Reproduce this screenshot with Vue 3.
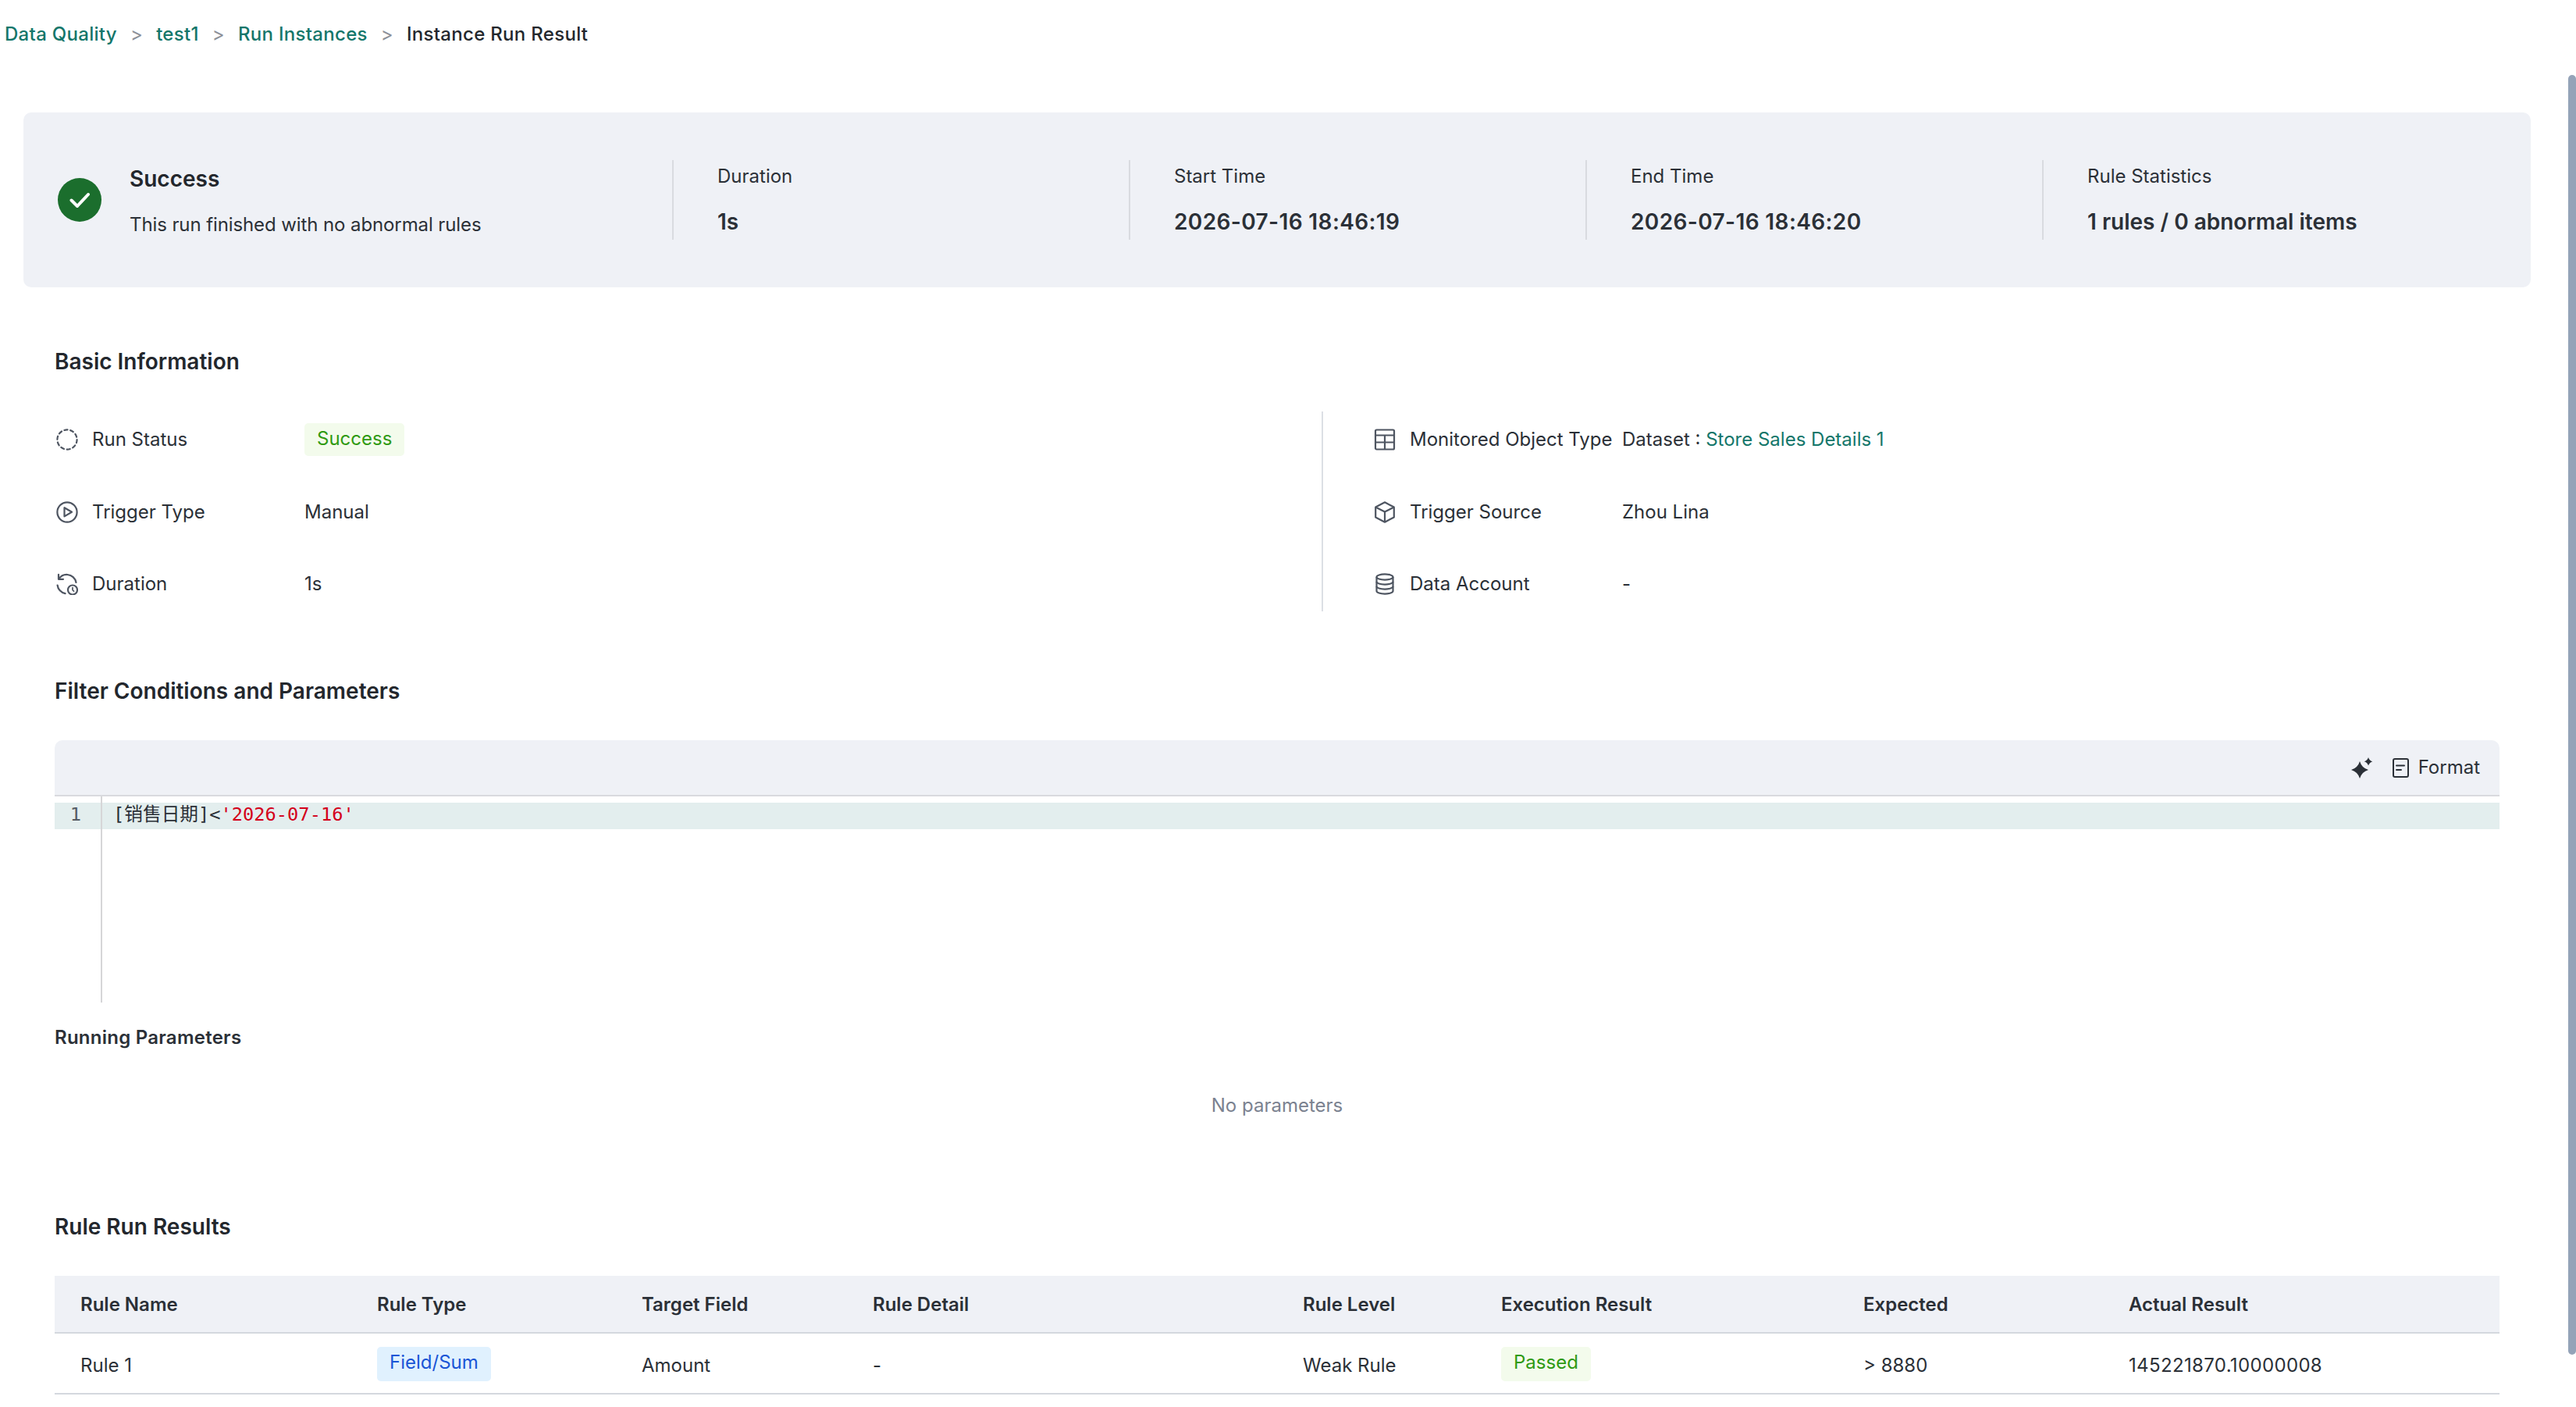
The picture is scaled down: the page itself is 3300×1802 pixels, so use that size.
<script setup>
const crumbs = ['Data Quality', 'test1', 'Run Instances']

const stats = [
  { label: 'Duration', value: '1s' },
  { label: 'Start Time', value: '2026-07-16 18:46:19', num: true },
  { label: 'End Time', value: '2026-07-16 18:46:20', num: true },
  { label: 'Rule Statistics', value: '1 rules / 0 abnormal items' }
]

const columns = [
  { name: 'Rule Name', width: 380 },
  { name: 'Rule Type', width: 339 },
  { name: 'Target Field', width: 296 },
  { name: 'Rule Detail', width: 551 },
  { name: 'Rule Level', width: 254 },
  { name: 'Execution Result', width: 464 },
  { name: 'Expected', width: 340 },
  { name: 'Actual Result', width: 508 }
]
</script>

<template>
  <div class="page">
    <nav class="crumbs">
      <template v-for="c in crumbs" :key="c">
        <a class="link">{{ c }}</a>
        <span class="sep">&gt;</span>
      </template>
      <span class="current">Instance Run Result</span>
    </nav>

    <section class="summary">
      <div class="summary-main">
        <svg class="ok-icon" viewBox="0 0 56 56">
          <circle cx="28" cy="28" r="28" fill="#1b6e2d" />
          <path d="M17.5 28.5l7.5 7.5 14-15" fill="none" stroke="#fff" stroke-width="4" stroke-linecap="round" stroke-linejoin="round" />
        </svg>
        <div class="summary-text">
          <div class="summary-title">Success</div>
          <div class="summary-desc">This run finished with no abnormal rules</div>
        </div>
      </div>
      <div v-for="s in stats" :key="s.label" class="stat">
        <div class="stat-label">{{ s.label }}</div>
        <div class="stat-value" :class="{ num: s.num }">{{ s.value }}</div>
      </div>
    </section>

    <div class="content">
      <h2 class="title basic-title">Basic Information</h2>
      <div class="info">
        <div class="info-col">
          <div class="row">
            <svg class="icon" viewBox="0 0 28 28" fill="none" stroke="#4e5561" stroke-width="2.2">
              <circle cx="14" cy="14" r="12.6" stroke-dasharray="4.2 3.7" stroke-linecap="round" />
            </svg>
            <span class="key">Run Status</span>
            <span class="tag tag-green">Success</span>
          </div>
          <div class="row">
            <svg class="icon" viewBox="0 0 28 28" fill="none" stroke="#4e5561" stroke-width="2.2" stroke-linejoin="round">
              <circle cx="14" cy="14" r="12.6" />
              <path d="M10.5 8.2v11.2L20 13.8z" />
            </svg>
            <span class="key">Trigger Type</span>
            <span>Manual</span>
          </div>
          <div class="row">
            <svg class="icon" viewBox="0 0 28 28" fill="none" stroke="#4e5561" stroke-width="2.2" stroke-linecap="round" stroke-linejoin="round">
              <path d="M3.5 7.5C6 3.5 10 1.6 14.5 2c5.5.6 10 4.5 11 10" />
              <path d="M3 1.8v6h6" />
              <path d="M1.6 15.5c.6 5 4.4 9.5 10 10.6" />
              <circle cx="21" cy="21.5" r="6" />
              <path d="M21 18.5v3.2l1.6 1.4" stroke-width="1.7" />
            </svg>
            <span class="key">Duration</span>
            <span>1s</span>
          </div>
        </div>
        <div class="info-col info-right">
          <div class="row">
            <svg class="icon" viewBox="0 0 28 28" fill="none" stroke="#4e5561" stroke-width="2.2" stroke-linejoin="round">
              <rect x="2" y="1.5" width="24" height="25" rx="1.5" />
              <path d="M2 8.5h24M2 17.5h24M14 8.5v18" />
            </svg>
            <span class="key">Monitored Object Type</span>
            <span>Dataset : <a class="link plain">Store Sales Details 1</a></span>
          </div>
          <div class="row">
            <svg class="icon" viewBox="0 0 28 28" fill="none" stroke="#4e5561" stroke-width="2.2" stroke-linejoin="round">
              <path d="M14 1.3l11.8 6.2v13L14 26.7 2.2 20.5v-13z" />
              <path d="M2.2 7.5L14 13.6l11.8-6.1M14 13.6v13" />
            </svg>
            <span class="key">Trigger Source</span>
            <span>Zhou Lina</span>
          </div>
          <div class="row">
            <svg class="icon" viewBox="0 0 28 28" fill="none" stroke="#4e5561" stroke-width="2.2" stroke-linejoin="round">
              <ellipse cx="14" cy="5" rx="10.5" ry="3.6" />
              <path d="M3.5 5v18c0 2 4.7 3.6 10.5 3.6S24.5 25 24.5 23V5" />
              <path d="M3.5 11c0 2 4.7 3.6 10.5 3.6S24.5 13 24.5 11M3.5 17c0 2 4.7 3.6 10.5 3.6S24.5 19 24.5 17" />
            </svg>
            <span class="key">Data Account</span>
            <span>-</span>
          </div>
        </div>
      </div>

      <h2 class="title filter-title">Filter Conditions and Parameters</h2>
      <div class="toolbar">
        <svg class="spark" viewBox="0 0 28 28" fill="#2b3037">
          <path d="M12 6Q14.5 14.5 23 17 14.5 19.5 12 28 9.5 19.5 1 17 9.5 14.5 12 6z" />
          <path d="M23 1Q24.2 5.1 28.3 6.3 24.2 7.5 23 11.6 21.8 7.5 17.7 6.3 21.8 5.1 23 1z" />
        </svg>
        <svg class="doc" viewBox="0 0 21 25" fill="none" stroke="#2b3037" stroke-width="2">
          <rect x="1" y="1" width="19" height="23" rx="2" />
          <path d="M5 9.5h10M5 15h6" stroke-linecap="round" />
        </svg>
        <span>Format</span>
      </div>
      <div class="editor">
        <div class="gutter"><div class="line-no">1</div></div>
        <div class="code-area">
          <div class="code-line">[销售日期]&lt;<span class="str">'2026-07-16'</span></div>
        </div>
      </div>

      <h3 class="sub-title">Running Parameters</h3>
      <div class="empty">No parameters</div>

      <h2 class="title rules-title">Rule Run Results</h2>
      <table class="rules">
        <colgroup>
          <col v-for="c in columns" :key="c.name" :style="{ width: c.width + 'px' }" />
        </colgroup>
        <thead>
          <tr>
            <th v-for="c in columns" :key="c.name">{{ c.name }}</th>
          </tr>
        </thead>
        <tbody>
          <tr>
            <td>Rule 1</td>
            <td><span class="tag tag-blue">Field/Sum</span></td>
            <td>Amount</td>
            <td>-</td>
            <td>Weak Rule</td>
            <td><span class="tag tag-green">Passed</span></td>
            <td>&gt; 8880</td>
            <td class="actual">145221870.10000008</td>
          </tr>
        </tbody>
      </table>
    </div>

    <div class="scrollbar"></div>
  </div>
</template>

<style>
html,
body {
  margin: 0;
  background: #fff;
}
</style>

<style scoped>
.page {
  position: relative;
  height: 1802px;
  overflow: hidden;
  font-family: Inter, "Noto Sans CJK SC", sans-serif;
  font-size: 24px;
  line-height: 32px;
  color: #2b3037;
}

.crumbs {
  display: flex;
  align-items: center;
  height: 32px;
  padding: 28px 0 0 6px;
  font-weight: 500;
  letter-spacing: 0.3px;
}

.sep {
  margin: 0 17px;
  color: #8c9098;
  font-weight: 400;
}

.link {
  color: #14766a;
}

.link.plain {
  font-weight: 400;
}

.current {
  color: #23272d;
}

.summary {
  display: grid;
  grid-template-columns: 831px repeat(4, 585px);
  align-items: center;
  box-sizing: border-box;
  width: 3212px;
  height: 224px;
  margin: 84px 0 0 30px;
  background: #eff1f6;
  border-radius: 10px;
}

.summary-main {
  display: flex;
  align-items: center;
  gap: 36px;
  padding-left: 44px;
}

.summary-text {
  padding-top: 3px;
}

.ok-icon {
  width: 56px;
  height: 56px;
  flex: none;
}

.summary-title {
  font-size: 28px;
  line-height: 36px;
  font-weight: 600;
  color: #23272d;
}

.summary-desc {
  margin-top: 25px;
  line-height: 32px;
  letter-spacing: -0.1px;
}

.stat {
  box-sizing: border-box;
  height: 102px;
  padding-left: 56px;
  border-left: 2px solid #d9dbe0;
}

.stat-label {
  margin-top: 5px;
  line-height: 32px;
}

.stat-value {
  margin-top: 26px;
  font-size: 28px;
  line-height: 32px;
  font-weight: 600;
}

.num {
  letter-spacing: 0.38px;
}

.content {
  padding: 0 98px 0 70px;
}

.title {
  margin: 0;
  font-size: 28px;
  line-height: 40px;
  font-weight: 600;
  color: #23272d;
}

.basic-title {
  margin-top: 75px;
}

.filter-title {
  margin-top: 82px;
}

.rules-title {
  margin-top: 119px;
}

.info {
  display: flex;
  margin-top: 44px;
}

.info-col {
  display: flex;
  flex-direction: column;
  gap: 50.5px;
  padding: 15px 0 14px;
  width: 1623px;
}

.info-right {
  width: auto;
  padding-left: 63px;
  border-left: 2px solid #dcdfe5;
}

.row {
  display: flex;
  align-items: center;
  height: 42px;
}

.icon {
  width: 28px;
  height: 28px;
  flex: none;
  margin-right: 18px;
  margin-left: 2px;
}

.key {
  width: 272px;
  flex: none;
}

.tag {
  display: inline-block;
  padding: 0 16px;
  height: 42px;
  line-height: 40px;
  border-radius: 5px;
}

.tag-green {
  color: #2f9a12;
  background: #f3fbec;
}

.tag-blue {
  color: #1a55d6;
  background: #e0f1fe;
}

.toolbar {
  display: flex;
  align-items: center;
  justify-content: flex-end;
  box-sizing: border-box;
  height: 72px;
  margin-top: 43px;
  padding-right: 25px;
  background: #eff1f6;
  border-bottom: 2px solid #d9dade;
  border-radius: 10px 10px 0 0;
}

.spark {
  width: 28px;
  height: 28px;
  margin-right: 26px;
}

.doc {
  width: 21px;
  height: 25px;
  margin-right: 12px;
}

.editor {
  display: flex;
  height: 264px;
  font-family: "DejaVu Sans Mono", "Noto Sans CJK SC", monospace;
  font-size: 23.7px;
  line-height: 30px;
}

.gutter {
  width: 59px;
  flex: none;
  padding-top: 8px;
  border-right: 2px solid #d6d6d8;
}

.line-no {
  height: 34px;
  padding-right: 25px;
  text-align: right;
  color: #555b63;
  background: #e3eeee;
}

.code-area {
  flex: 1;
  padding-top: 8px;
}

.code-line {
  height: 34px;
  padding-left: 14px;
  background: #e3eeee;
}

.str {
  color: #d4001a;
}

.sub-title {
  margin: 29px 0 0;
  font-size: 24px;
  line-height: 32px;
  font-weight: 600;
  letter-spacing: 0.25px;
}

.empty {
  margin-top: 55px;
  text-align: center;
  color: #7b8290;
}

.rules {
  width: 3132px;
  margin-top: 43px;
  table-layout: fixed;
  border-collapse: separate;
  border-spacing: 0;
}

.rules th {
  box-sizing: border-box;
  height: 74px;
  padding: 2px 0 0 33px;
  text-align: left;
  font-weight: 600;
  background: #eff1f6;
  border-bottom: 2px solid #d4d8de;
}

.rules td {
  box-sizing: border-box;
  height: 78px;
  padding: 6px 0 0 33px;
  border-bottom: 2px solid #d4d8de;
}

.rules td .tag {
  height: 44px;
  line-height: 40px;
  vertical-align: middle;
  margin-top: -4px;
}

.actual {
  padding-bottom: 6px;
  letter-spacing: 0.35px;
}

.scrollbar {
  position: absolute;
  top: 96px;
  right: 0;
  width: 10px;
  height: 1639px;
  background: #94a3b8;
  border-radius: 5px;
}
</style>
